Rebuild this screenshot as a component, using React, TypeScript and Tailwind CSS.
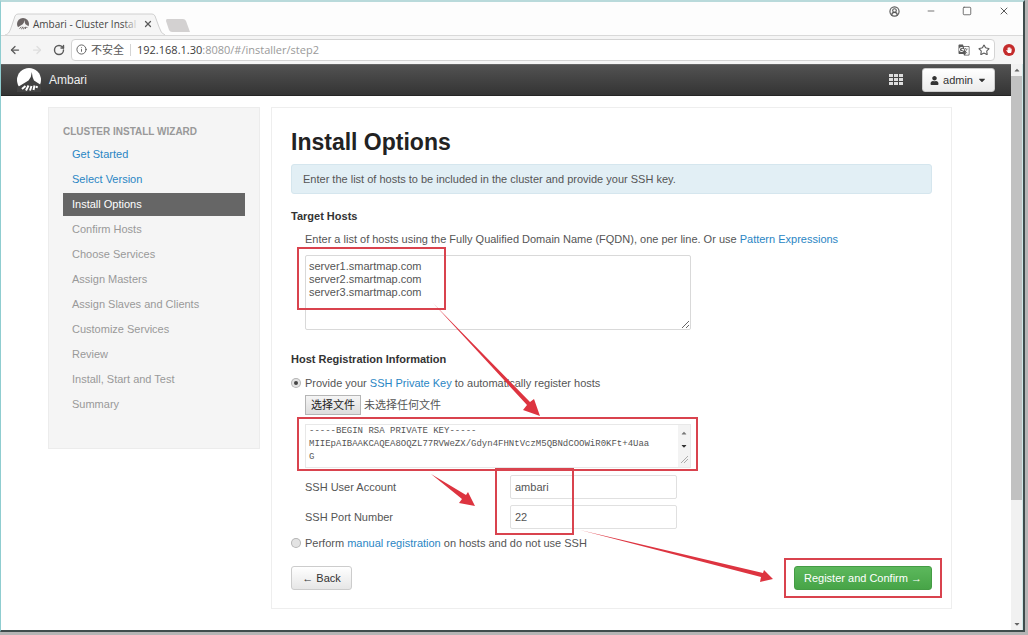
import React, { useState } from 'react';
import { ArrowLeft, ArrowRight, RotateCw, Info, Star, X, Minus, Square, CircleUserRound } from 'lucide-react';
import { FaUser, FaCaretDown, FaCaretUp, FaHandPaper } from 'react-icons/fa';
import { MdGTranslate } from 'react-icons/md';

interface WizardStep {
  name: string;
  state: 'done' | 'active' | 'pending';
}

const steps: WizardStep[] = [
  { name: 'Get Started', state: 'done' },
  { name: 'Select Version', state: 'done' },
  { name: 'Install Options', state: 'active' },
  { name: 'Confirm Hosts', state: 'pending' },
  { name: 'Choose Services', state: 'pending' },
  { name: 'Assign Masters', state: 'pending' },
  { name: 'Assign Slaves and Clients', state: 'pending' },
  { name: 'Customize Services', state: 'pending' },
  { name: 'Review', state: 'pending' },
  { name: 'Install, Start and Test', state: 'pending' },
  { name: 'Summary', state: 'pending' },
];

const stepStyles = {
  done: 'text-[#2a86c4]',
  active: 'bg-[#666666] text-white',
  pending: 'text-[#999999]',
};

const radioClass = 'm-px h-2 w-2 appearance-none rounded-full border-2 border-[#e3e3e3] bg-[#e3e3e3] ring-1 ring-[#b5b5b5] checked:bg-[#444444]';
const inputClass = 'h-6 rounded-[2px] border border-[#e0e0e0] px-1';

const privateKey = [
  '-----BEGIN RSA PRIVATE KEY-----',
  'MIIEpAIBAAKCAQEA8OQZL77RVWeZX/Gdyn4FHNtVczM5QBNdCOOWiR0KFt+4Uaa',
  'G',
].join('\n');

const AmbariLogo: React.FC<{ className?: string; light?: boolean }> = ({ className, light }) => (
  <svg viewBox="0 0 24 24" className={className} aria-hidden="true">
    <circle cx="12" cy="12" r="12" fill={light ? '#ffffff' : '#6b6464'} />
    <path
      d="M14.8 4 L15.6 9 L17 12.5 L25 17.5 V25 H0 V19.5 L11.5 12.5 L13.8 9 Z"
      fill={light ? '#434343' : '#f3f3f3'}
    />
    <path
      d="M5 21 L8.5 18 M9 22.5 L11.5 17.5 M13 22.5 L14.5 18 M16.5 22 L17.5 17.5 M19.5 20 L20 18"
      fill="none"
      stroke={light ? '#ffffff' : '#6b6464'}
      strokeWidth="2"
    />
  </svg>
);

const Link: React.FC<{ children: React.ReactNode }> = ({ children }) => (
  <a href="#" className="text-[#2a86c4] hover:underline">{children}</a>
);

// Red frame that highlights a part of the form
const Highlight: React.FC<{ className: string }> = ({ className }) => (
  <div className={`pointer-events-none absolute z-10 border-2 border-[#d9434e] ${className}`} />
);

const BrowserChrome: React.FC = () => (
  <header className="bg-[#fdfdfd] text-[#5a5a5a]">
    <div className="flex h-[33px] justify-between">
      <div className="flex items-end pl-1">
        <div className="relative flex h-[22px] w-40 items-center gap-1 pl-3">
          <svg viewBox="0 0 160 22" preserveAspectRatio="none" className="absolute inset-0 h-full w-full" aria-hidden="true">
            <path d="M0 22 C4 21 5 18 7 12 L10 3 Q11 1 13 1 H147 Q149 1 150 3 L154 14 Q156 21 160 22" fill="#f5f5f5" stroke="#d0d0d0" />
          </svg>
          <AmbariLogo className="relative h-3 w-3" />
          <span className="relative w-[106px] whitespace-nowrap text-[10px] leading-4 text-[#444444]">
            Ambari - Cluster Instal
            <span className="absolute inset-y-0 right-0 w-4 bg-linear-to-l from-[#f5f5f5] to-transparent" />
          </span>
          <button aria-label="Close tab" className="relative">
            <X className="h-[10px] w-[10px]" strokeWidth={3} />
          </button>
        </div>
        <button aria-label="New tab" className="mb-[3px]">
          <svg viewBox="0 0 26 13" className="h-[13px] w-[26px]" aria-hidden="true">
            <path d="M2 0 H18 Q20 0 21 2 L25 13 H7 Q5 13 4 11 L1 2 Q1 0 2 0Z" fill="#d3d1d1" />
          </svg>
        </button>
      </div>
      <div className="flex h-[18px] items-center gap-[26px] pr-[13px]">
        <button aria-label="Profile"><CircleUserRound className="h-[11px] w-[11px]" strokeWidth={2.5} /></button>
        <button aria-label="Minimize"><Minus className="h-[10px] w-[10px]" /></button>
        <button aria-label="Maximize"><Square className="h-[10px] w-[10px]" /></button>
        <button aria-label="Close"><X className="h-3 w-3" /></button>
      </div>
    </div>
    <div className="flex h-[29px] items-center border-t border-[#d9d9d9] bg-[#f5f5f5] pb-px pl-2">
      <div className="flex w-[62px] items-center gap-[10px]">
        <button aria-label="Back"><ArrowLeft className="h-3 w-3" strokeWidth={2.5} /></button>
        <button aria-label="Forward" disabled className="text-[#dedede]"><ArrowRight className="h-3 w-3" strokeWidth={2.5} /></button>
        <button aria-label="Reload"><RotateCw className="h-3 w-3" strokeWidth={2.8} /></button>
      </div>
      <div className="flex h-[22px] flex-1 items-center gap-1 rounded-sm border border-[#d4d4d4] bg-white px-1">
        <Info className="h-[11px] w-[11px]" />
        <span className="text-[11px] leading-4">不安全</span>
        <span className="mx-[2px] h-3 w-px bg-[#d4d4d4]" />
        <span className="flex-1 text-[11px] leading-4 text-[#9a9a9a]">
          <span className="text-[#3c3c3c]">192.168.1.30</span>:8080/#/installer/step2
        </span>
        <button aria-label="Translate this page"><MdGTranslate className="h-3 w-3" /></button>
        <button aria-label="Bookmark" className="ml-1"><Star className="h-3 w-3" strokeWidth={2.2} /></button>
      </div>
      <button aria-label="Ad blocker" className="mx-2 flex h-3 w-3 items-center justify-center rounded-full bg-[#c42b2b]">
        <FaHandPaper className="h-[6px] w-[6px] text-white" />
      </button>
    </div>
  </header>
);

const Navbar: React.FC = () => (
  <nav className="flex h-8 items-center justify-between border-y border-t-[#666666] border-b-[#252525] bg-linear-to-b from-[#525252] to-[#343434] px-4">
    <a href="#" className="flex items-center gap-2 text-[12px] leading-4 text-[#eeeeee]">
      <AmbariLogo className="h-6 w-6" light />
      Ambari
    </a>
    <div className="flex items-center gap-[19px]">
      <button aria-label="Views">
        <svg viewBox="0 0 14 12" className="h-3 w-[14px] fill-[#dddddd]" aria-hidden="true">
          {[0, 4, 8].map((y) => [0, 5, 10].map((x) => (
            <rect key={`${x}-${y}`} x={x} y={y} width="4" height="3" />
          )))}
        </svg>
      </button>
      <button className="flex h-6 w-[73px] items-center justify-center gap-1 rounded-[3px] border border-[#cccccc] bg-linear-to-b from-white to-[#ebebeb] text-[11px] leading-4 text-[#333333]">
        <FaUser className="h-[9px] w-[9px]" />
        admin
        <FaCaretDown className="h-[10px] w-[10px]" />
      </button>
    </div>
  </nav>
);

const Sidebar: React.FC = () => (
  <aside className="w-[212px] shrink-0 border border-[#ececec] bg-[#f5f5f5] px-[14px] pt-[15px] pb-8">
    <h2 className="mb-[2px] text-[10px] leading-[18px] font-bold text-[#999999]">CLUSTER INSTALL WIZARD</h2>
    <ul className="flex flex-col gap-[2px]">
      {steps.map((step) => (
        <li key={step.name}>
          <a href="#" className={`block h-[23px] px-[9px] text-[11px] leading-[23px] ${stepStyles[step.state]}`}>
            {step.name}
          </a>
        </li>
      ))}
    </ul>
  </aside>
);

const Arrows: React.FC = () => (
  <svg width="680" height="500" viewBox="272 108 680 500" className="pointer-events-none absolute top-0 left-0 z-20 fill-[#dd3440]" aria-hidden="true">
    <path d="M433 303 L530 402 L534 399 L540 416 L523 410 L527 405 Z" />
    <path d="M431 474 L466 495 L468 492 L475 506 L459 503 L462 499 Z" />
    <path d="M580 530 L763 573 L764 570 L773 579 L760 582 L761 577 Z" />
  </svg>
);

const InstallOptions: React.FC = () => {
  const [hosts, setHosts] = useState('server1.smartmap.com\nserver2.smartmap.com\nserver3.smartmap.com');
  const [method, setMethod] = useState('ssh');

  return (
    <main className="relative min-w-0 flex-1 border border-[#eeeeee] px-[19px] pt-5 pb-[18px]">
      <h1 className="text-[23px] leading-7 font-bold text-[#222222]">Install Options</h1>
      <p className="mt-2 rounded-[3px] border border-[#d5e6ee] bg-[#e2eff5] px-[11px] py-[5px] text-[11px] leading-[18px]">
        Enter the list of hosts to be included in the cluster and provide your SSH key.
      </p>

      <h2 className="mt-[13px] leading-[18px] font-bold text-[#333333]">Target Hosts</h2>
      <div className="mt-[5px] pl-[14px]">
        <label htmlFor="hosts" className="block leading-[18px]">
          Enter a list of hosts using the Fully Qualified Domain Name (FQDN), one per line. Or use <Link>Pattern Expressions</Link>
        </label>
        <div className="relative mt-[7px] w-[386px]">
          <textarea
            id="hosts"
            value={hosts}
            onChange={(e) => setHosts(e.target.value)}
            className="block h-[75px] w-full rounded-[2px] border border-[#d9d9d9] px-[3px] py-1 leading-[13px]"
          />
          <Highlight className="-top-2 -left-2 h-[63px] w-[149px]" />
        </div>
      </div>

      <h2 className="mt-5 leading-[18px] font-bold text-[#333333]">Host Registration Information</h2>
      <div className="mt-[6px] flex items-center gap-1">
        <input id="ssh" type="radio" name="method" checked={method === 'ssh'} onChange={() => setMethod('ssh')} className={radioClass} />
        <label htmlFor="ssh" className="leading-[18px]">Provide your <Link>SSH Private Key</Link> to automatically register hosts</label>
      </div>
      <div className="pl-[14px]">
        <div className="mt-[3px] flex items-center gap-[3px]">
          <label htmlFor="keyfile" className="border border-[#b5b5b5] bg-linear-to-b from-[#f5f5f5] to-[#dddddd] px-[5px] leading-[18px] text-[#222222]">选择文件</label>
          <input id="keyfile" type="file" className="sr-only" />
          <span>未选择任何文件</span>
        </div>
        <div className="relative mt-[9px] flex h-[44px] w-[386px] border border-[#e8e8e8]">
          <textarea
            aria-label="SSH private key"
            defaultValue={privateKey}
            className="min-w-0 flex-1 resize-none overflow-hidden pl-[3px] font-['Liberation_Mono',monospace] text-[9px] leading-[13px] whitespace-pre"
          />
          <div className="flex w-3 flex-col items-center justify-between bg-[#f3f3f3] py-1 text-[#777777]" aria-hidden="true">
            <FaCaretUp className="h-2 w-2" />
            <FaCaretDown className="h-2 w-2 text-[#333333]" />
            <svg viewBox="0 0 8 8" className="h-2 w-2 stroke-[#aaaaaa]"><path d="M1 8 L8 1 M4 8 L8 4" /></svg>
          </div>
          <Highlight className="-top-2 -left-[9px] h-[54px] w-[401px]" />
        </div>
        <div className="relative mt-[7px] grid grid-cols-[205px_167px] gap-y-[6px]">
          <label htmlFor="user" className="leading-6">SSH User Account</label>
          <input id="user" type="text" defaultValue="ambari" className={inputClass} />
          <label htmlFor="port" className="leading-6">SSH Port Number</label>
          <input id="port" type="text" defaultValue="22" className={inputClass} />
          <Highlight className="-top-[7px] left-[190px] h-[67px] w-[79px]" />
        </div>
      </div>
      <div className="mt-[5px] flex items-center gap-1">
        <input id="manual" type="radio" name="method" checked={method === 'manual'} onChange={() => setMethod('manual')} className={radioClass} />
        <label htmlFor="manual" className="leading-[18px]">Perform <Link>manual registration</Link> on hosts and do not use SSH</label>
      </div>

      <div className="mt-[14px] flex items-center justify-between">
        <button className="h-6 w-[61px] rounded-[3px] border border-[#cccccc] bg-linear-to-b from-white to-[#e6e6e6] text-[#333333]">← Back</button>
        <div className="relative">
          <button className="h-6 w-[138px] rounded-[3px] border border-[#449c44] bg-linear-to-b from-[#5cb85c] to-[#47a447] text-white">Register and Confirm →</button>
          <Highlight className="-inset-x-[10px] -inset-y-2" />
        </div>
      </div>
      <Arrows />
    </main>
  );
};

const PageScrollbar: React.FC = () => (
  <div className="flex w-[11px] shrink-0 flex-col items-center bg-[#f1f1f1] text-[#666666]" aria-hidden="true">
    <FaCaretUp className="my-[2px] h-2 w-2" />
    <div className="w-full grow-[423] bg-[#c1c1c1]" />
    <div className="grow-[118]" />
    <FaCaretDown className="my-[2px] h-2 w-2" />
  </div>
);

const App: React.FC = () => (
  <div className="flex min-h-screen bg-[#b5b5b5] pr-[3px] pb-[3px] font-['Liberation_Sans','Noto_Sans_CJK_SC',sans-serif] text-[11px] text-[#555555]">
    <div className="flex flex-1 flex-col border-t-2 border-r-2 border-b-2 border-l border-t-[#b9dadb] border-r-[#3f4c4c] border-b-[#3f4c4c] border-l-[#8fcdd0] bg-white">
      <div className="font-['Open_Sans','Noto_Sans_CJK_SC',sans-serif]">
        <BrowserChrome />
      </div>
      <div className="flex flex-1 border-r border-[#cfe8e8]">
        <div className="min-w-0 flex-1">
          <Navbar />
          <div className="flex items-start gap-[11px] pt-[11px] pr-[59px] pb-5 pl-[47px]">
            <Sidebar />
            <InstallOptions />
          </div>
        </div>
        <PageScrollbar />
      </div>
    </div>
  </div>
);

export default App;
